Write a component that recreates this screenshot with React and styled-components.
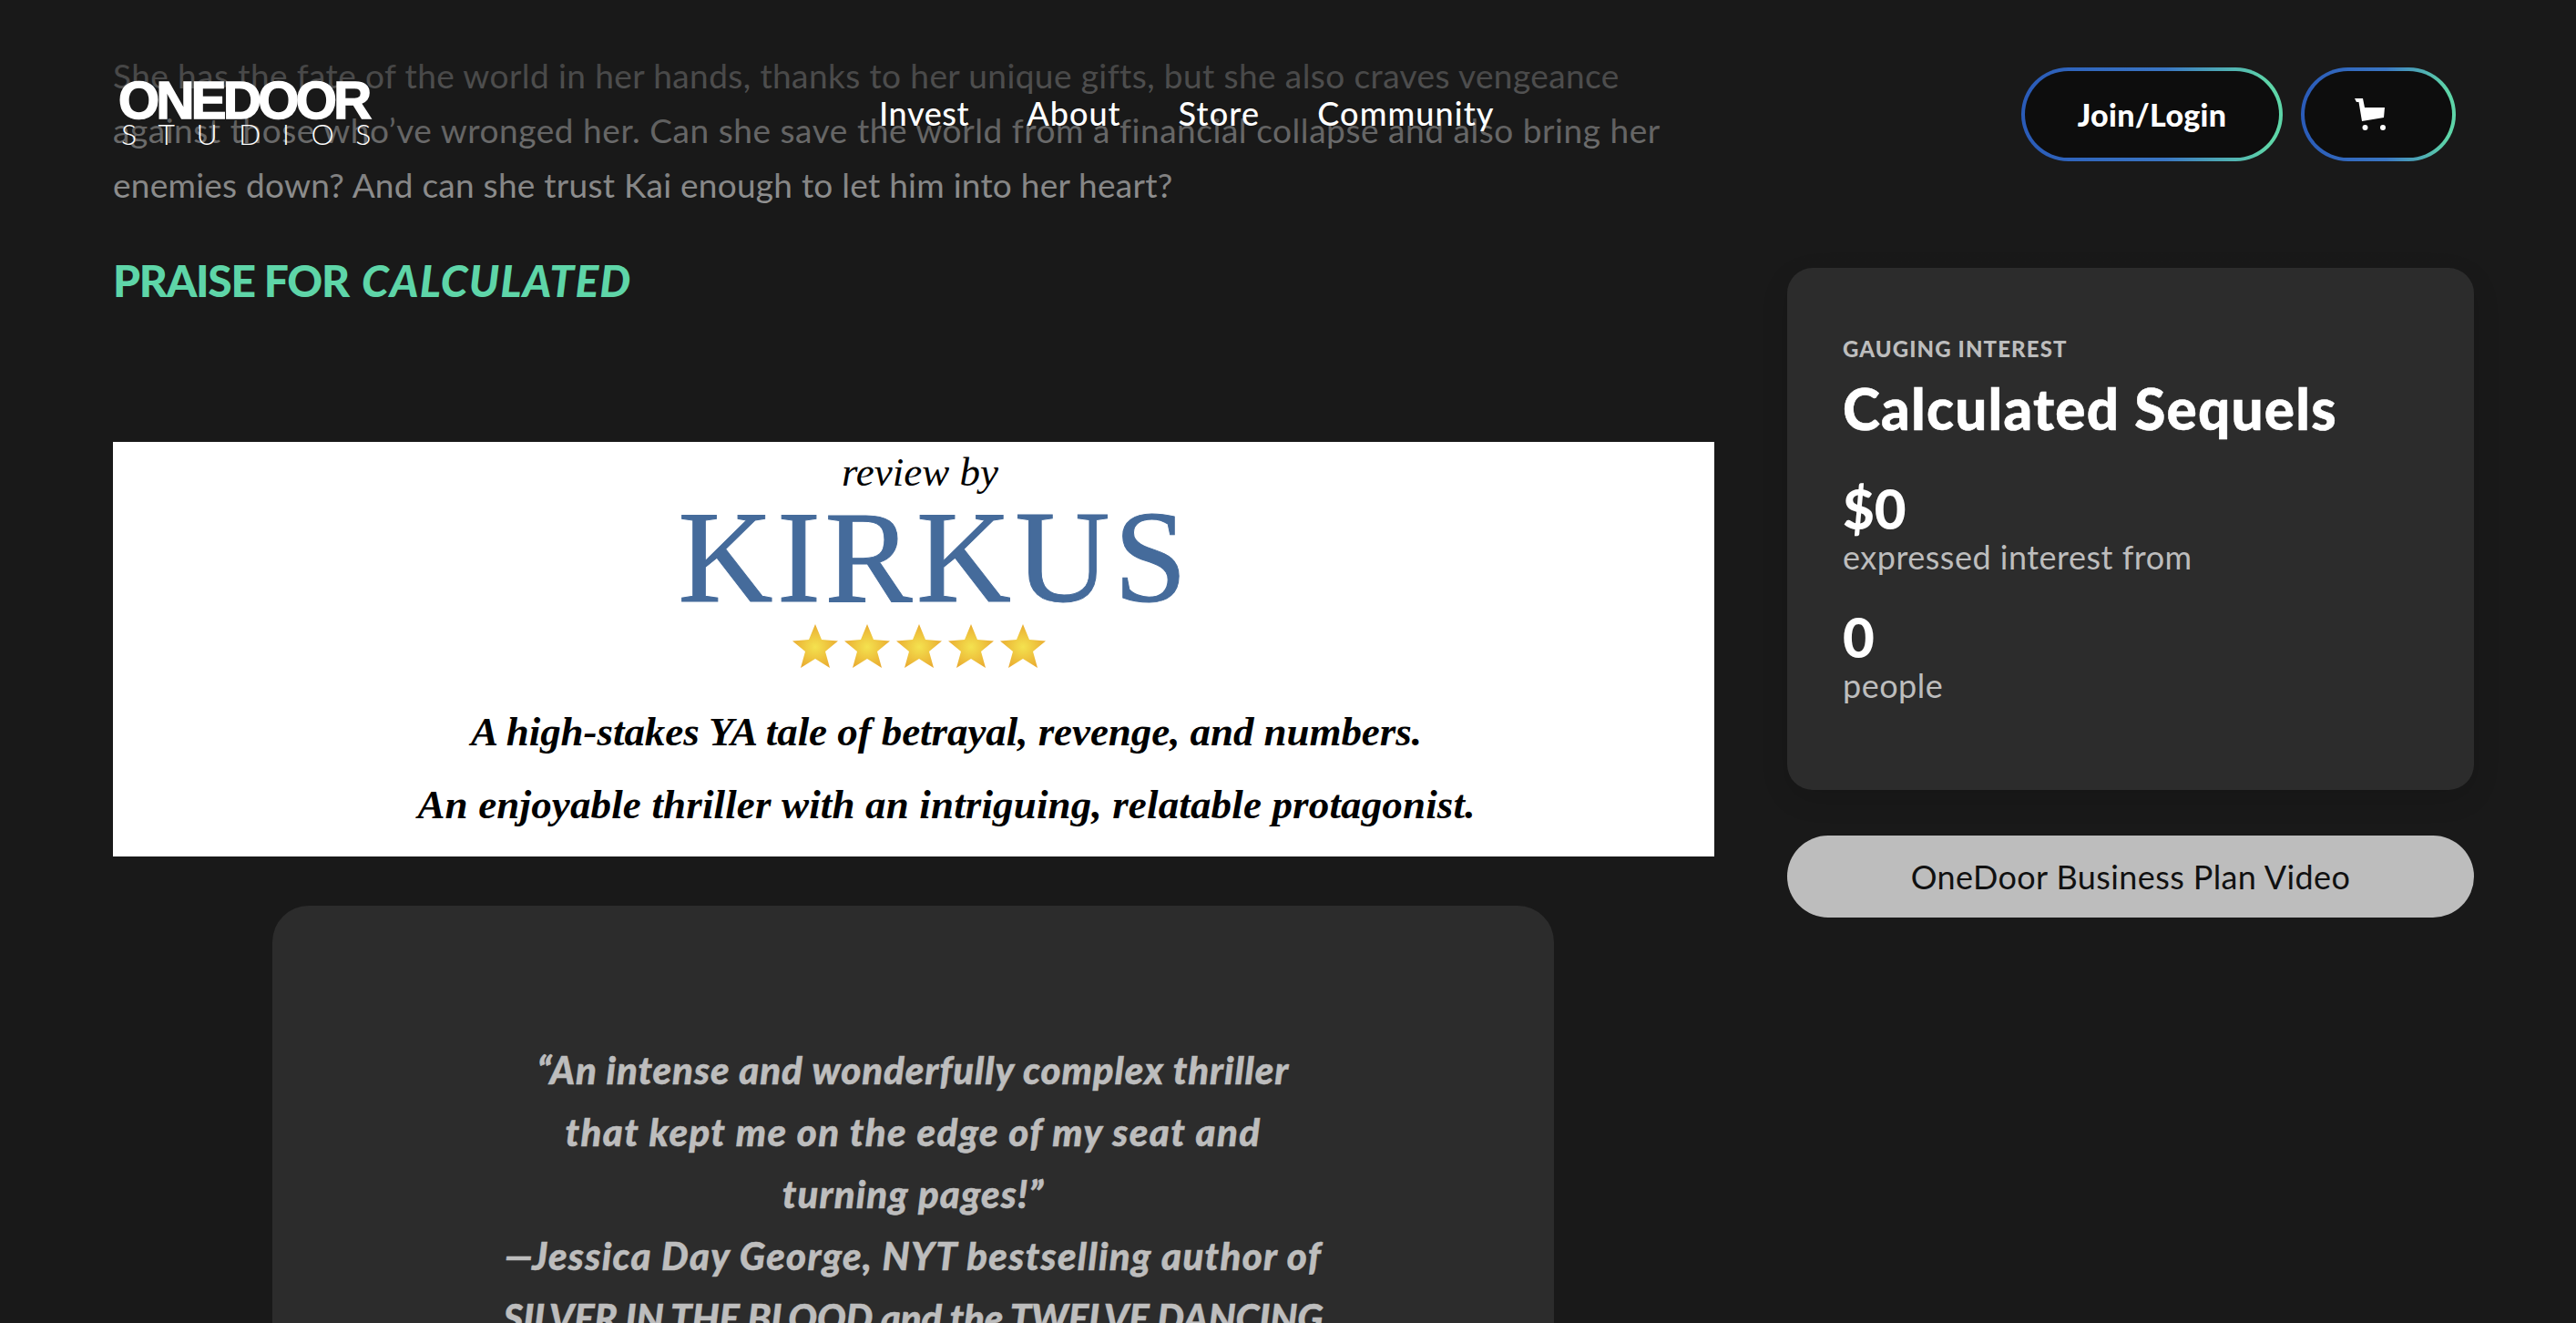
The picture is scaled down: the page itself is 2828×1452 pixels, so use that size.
import React from "react";
import styled, { createGlobalStyle } from "styled-components";

const Global = createGlobalStyle`
  html, body { margin: 0; padding: 0; background: #191919; }
  body { height: 1452px; overflow: hidden; font-family: "Lato", "Inter", sans-serif; }
  * { box-sizing: border-box; }
`;

const Page = styled.div`
  position: relative;
  width: 2828px;
  height: 1452px;
  overflow: hidden;
  background: #191919;
`;

const Header = styled.header`
  position: absolute;
  inset: 0 0 auto 0;
  height: 290px;
  padding: 74px 132px 0 130px;
  display: flex;
  align-items: flex-start;
  background: linear-gradient(
    to bottom,
    rgba(25, 25, 25, 0.9) 0,
    rgba(25, 25, 25, 0.7) 83px,
    rgba(25, 25, 25, 0.55) 143px,
    rgba(25, 25, 25, 0.33) 203px,
    rgba(25, 25, 25, 0) 290px
  );
`;

const Logo = styled.div`
  width: 279px;
  margin-top: 13px;
  color: #fff;
  display: flex;
  flex-direction: column;
`;

const LogoTop = styled.div`
  font-family: "Liberation Sans", sans-serif;
  font-weight: 700;
  font-size: 58px;
  line-height: 46px;
  letter-spacing: -3.6px;
  -webkit-text-stroke: 1.6px #fff;
  white-space: nowrap;
`;

const LogoBottom = styled.div`
  font-family: "Lato", sans-serif;
  font-weight: 300;
  font-size: 32px;
  line-height: 28px;
  letter-spacing: 23.4px;
  padding-left: 3px;
  white-space: nowrap;
`;

const Nav = styled.nav`
  margin-left: 556px;
  margin-top: 26px;
  display: flex;
  gap: 63px;
`;

const NavLink = styled.a`
  color: #fff;
  font-size: 36px;
  font-weight: 500;
  line-height: 48px;
  letter-spacing: ${(p) => p.$ls}px;
  white-space: nowrap;
`;

const Actions = styled.div`
  margin-left: auto;
  display: flex;
  gap: 20px;
`;

const GradientButton = styled.button`
  width: ${(p) => p.$w}px;
  height: 103px;
  border: 4px solid transparent;
  border-radius: 52px;
  background:
    linear-gradient(#0d0d0d, #0d0d0d) padding-box,
    linear-gradient(90deg, #2a5bb8 0%, #3a76c4 55%, #5ed5a8 95%) border-box;
  color: #fff;
  font-family: inherit;
  font-size: 34px;
  font-weight: 900;
  letter-spacing: 0.3px;
  display: flex;
  align-items: center;
  justify-content: center;
  padding: 0;
`;

const CartIcon = styled.svg`
  margin-right: 16px;
`;

const Layout = styled.main`
  display: grid;
  grid-template-columns: 1758px 754px;
  column-gap: 80px;
  padding-left: 124px;
  align-items: start;
`;

const LeftColumn = styled.div`
  padding-top: 53px;
  display: flex;
  flex-direction: column;
`;

const Paragraph = styled.div`
  color: #bdbdbd;
  font-size: 37px;
  line-height: 60px;
`;

const ParagraphLine = styled.div`
  letter-spacing: ${(p) => p.$ls}px;
  white-space: nowrap;
`;

const Heading = styled.h2`
  margin: 45px 0 0;
  color: #5ed5a8;
  font-size: 48px;
  line-height: 60px;
  font-weight: 900;
  letter-spacing: -1.3px;
`;

const HeadingEm = styled.em`
  letter-spacing: 1.2px;
  margin-left: 4px;
`;

const Review = styled.div`
  margin-top: 147px;
  height: 455px;
  background: #fff;
  display: flex;
  flex-direction: column;
  align-items: center;
  font-family: "Liberation Serif", serif;
  color: #000;
`;

const ReviewBy = styled.div`
  font-style: italic;
  font-size: 45px;
  line-height: 50px;
  height: 50px;
  margin: 8px 0 0 14px;
`;

const Kirkus = styled.div`
  font-size: 144px;
  line-height: 130px;
  color: #456b9b;
  letter-spacing: 4.5px;
  margin: 4px 0 0 46px;
  -webkit-text-stroke: 1px #456b9b;
`;

const Stars = styled.div`
  display: flex;
  gap: 7px;
  margin: 8px 0 0 12px;
`;

const ReviewLine = styled.div`
  font-weight: 700;
  font-style: italic;
  font-size: 45px;
  line-height: 80px;
  white-space: nowrap;
  letter-spacing: ${(p) => p.$ls}px;
  margin: ${(p) => p.$mt}px 0 0 72px;
`;

const QuoteCard = styled.section`
  margin: 54px 176px 0 175px;
  height: 700px;
  padding-top: 146px;
  background: #2c2c2c;
  border-radius: 40px;
  text-align: center;
  color: #bdbdbd;
  font-size: 42px;
  line-height: 68px;
  font-weight: 900;
  font-style: italic;
  -webkit-text-stroke: 0.5px #bdbdbd;
`;

const QuoteLine = styled.div`
  letter-spacing: ${(p) => p.$ls}px;
  white-space: nowrap;
`;

const RightColumn = styled.aside`
  padding-top: 294px;
  display: flex;
  flex-direction: column;
  gap: 50px;
`;

const InterestCard = styled.section`
  height: 573px;
  padding: 74px 60px 0 61px;
  background: #2c2c2c;
  border-radius: 28px;
  box-shadow: 0 10px 30px rgba(0, 0, 0, 0.12);
`;

const Eyebrow = styled.div`
  color: #bdbdbd;
  font-size: 24px;
  line-height: 30px;
  font-weight: 900;
  letter-spacing: 1.1px;
`;

const Title = styled.h1`
  margin: 14px 0 0;
  color: #fff;
  font-size: 62px;
  line-height: 72px;
  font-weight: 900;
  letter-spacing: 1.2px;
  -webkit-text-stroke: 0.5px #fff;
`;

const StatValue = styled.div`
  margin-top: ${(p) => p.$mt}px;
  color: #fff;
  font-size: 60px;
  line-height: 60px;
  font-weight: 900;
`;

const StatLabel = styled.div`
  color: #bdbdbd;
  font-size: 36px;
  line-height: 46px;
  letter-spacing: 0.5px;
`;

const VideoButton = styled.button`
  height: 90px;
  border: 0;
  border-radius: 45px;
  background: #bdbdbd;
  color: #111;
  font-family: inherit;
  font-size: 36px;
  letter-spacing: 0.4px;
`;

const StarPath = "M25 0 L32 17 L50 18.5 L36 30 L41 48 L25 38 L9 48 L14 30 L0 18.5 L18 17 Z";

const Star = ({ id }) => (
  <svg width="50" height="48" viewBox="0 0 50 48">
    <defs>
      <radialGradient id={id} cx="50%" cy="52%" r="55%">
        <stop offset="0%" stopColor="#f4e24f" />
        <stop offset="100%" stopColor="#e9a92f" />
      </radialGradient>
    </defs>
    <path d={StarPath} fill={`url(#${id})`} />
  </svg>
);

const Cart = () => (
  <CartIcon width="36" height="36" viewBox="0 0 36 36" fill="#fff">
    <path d="M0 0 H9 L11 10 H33 L32 21 L8 25 L4.5 4 H2 Z" />
    <circle cx="11.5" cy="32" r="3" />
    <circle cx="31" cy="32" r="3" />
  </CartIcon>
);

const body = [
  ["She has the fate of the world in her hands, thanks to her unique gifts, but she also craves vengeance", 0.41],
  ["against those who’ve wronged her. Can she save the world from a financial collapse and also bring her", 0.55],
  ["enemies down? And can she trust Kai enough to let him into her heart?", 0.25],
];

const quote = [
  ["“An intense and wonderfully complex thriller", 0.9],
  ["that kept me on the edge of my seat and", 1.4],
  ["turning pages!”", 1.1],
  ["—Jessica Day George, NYT bestselling author of", 1.3],
  ["SILVER IN THE BLOOD and the TWELVE DANCING", -0.2],
];

export default function App() {
  return (
    <Page>
      <Global />
      <Layout>
        <LeftColumn>
          <Paragraph>
            {body.map(([text, ls]) => (
              <ParagraphLine key={text} $ls={ls}>{text}</ParagraphLine>
            ))}
          </Paragraph>
          <Heading>
            PRAISE FOR <HeadingEm>CALCULATED</HeadingEm>
          </Heading>
          <Review>
            <ReviewBy>review by</ReviewBy>
            <Kirkus>KIRKUS</Kirkus>
            <Stars>
              {[0, 1, 2, 3, 4].map((i) => (
                <Star key={i} id={`star${i}`} />
              ))}
            </Stars>
            <ReviewLine $mt={30} $ls={-0.06}>A high-stakes YA tale of betrayal, revenge, and numbers.</ReviewLine>
            <ReviewLine $mt={0} $ls={0.15}>An enjoyable thriller with an intriguing, relatable protagonist.</ReviewLine>
          </Review>
          <QuoteCard>
            {quote.map(([text, ls]) => (
              <QuoteLine key={text} $ls={ls}>{text}</QuoteLine>
            ))}
          </QuoteCard>
        </LeftColumn>
        <RightColumn>
          <InterestCard>
            <Eyebrow>GAUGING INTEREST</Eyebrow>
            <Title>Calculated Sequels</Title>
            <StatValue $mt={44}>$0</StatValue>
            <StatLabel>expressed interest from</StatLabel>
            <StatValue $mt={35}>0</StatValue>
            <StatLabel>people</StatLabel>
          </InterestCard>
          <VideoButton>OneDoor Business Plan Video</VideoButton>
        </RightColumn>
      </Layout>
      <Header>
        <Logo>
          <LogoTop>ONEDOOR</LogoTop>
          <LogoBottom>STUDIOS</LogoBottom>
        </Logo>
        <Nav>
          <NavLink $ls={0.6}>Invest</NavLink>
          <NavLink $ls={1}>About</NavLink>
          <NavLink $ls={1.2}>Store</NavLink>
          <NavLink $ls={1.1}>Community</NavLink>
        </Nav>
        <Actions>
          <GradientButton $w={287}>Join/Login</GradientButton>
          <GradientButton $w={170}><Cart /></GradientButton>
        </Actions>
      </Header>
    </Page>
  );
}
